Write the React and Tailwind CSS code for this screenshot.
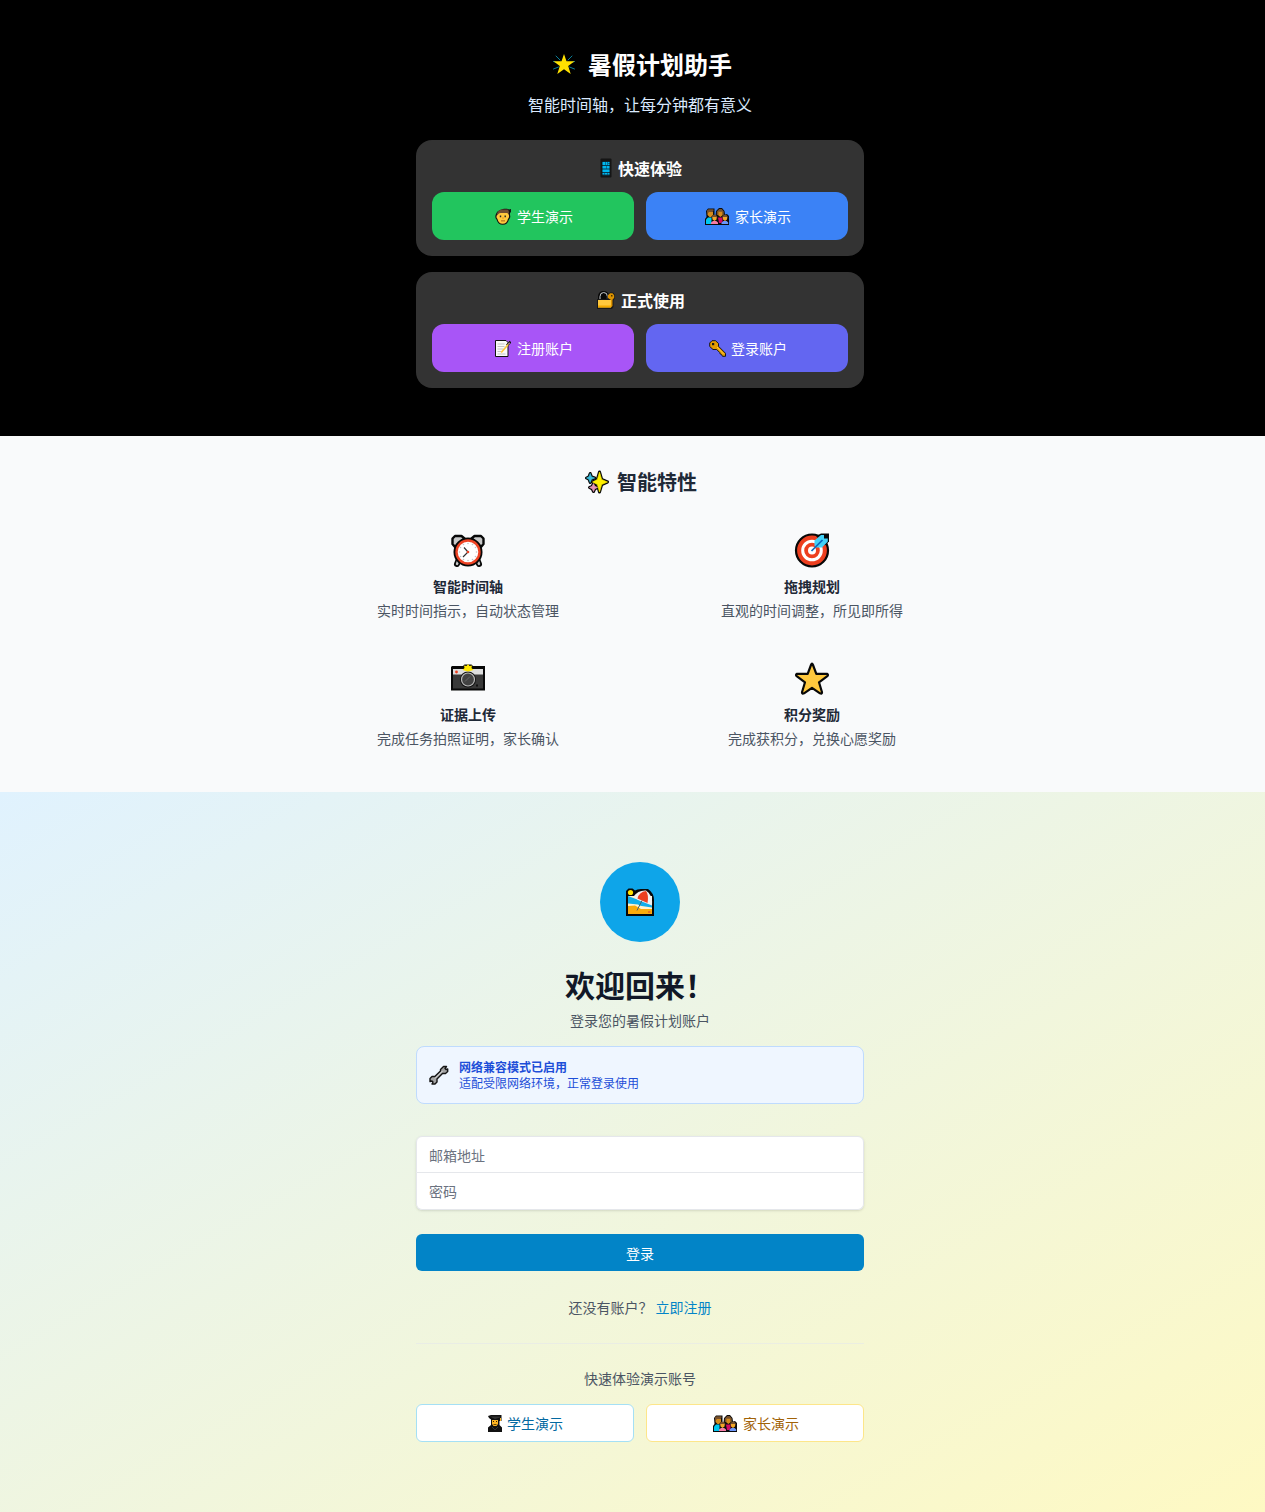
import React from "react";

function GlowingStar({ className }) {
  return (
    <svg viewBox="0 0 24 24" className={className} aria-hidden="true">
      <g stroke="#0a7d97" strokeWidth="1" strokeLinecap="round">
        <path d="M4 4l4 4M20 4l-4 4M1.500 9.500l3 1M22.500 9.500l-3 1M1.500 17l5-2M22.500 17l-5-2" />
      </g>
      <path fill="#ffe100" d="M12 2l2.500 7.200H22.500l-6.300 4.800 2.500 8L12 17.300l-6.700 4.700 2.500-8L1.500 9.200h8z" />
    </svg>
  );
}

function Phone({ className }) {
  return (
    <svg viewBox="0 0 12 20" className={className} aria-hidden="true">
      <rect x="0.500" y="0.500" width="11" height="19" rx="1" fill="#151515" />
      <rect x="2.500" y="3.500" width="7" height="14" fill="#073b50" />
      <g fill="#00b8f0">
        <path d="M2.500 4h3v3h-3zM6 4h1.500v3H6zM8 4h1.500v1.200H8zM8 5.800h1.500V7H8zM2.500 8h3.500v2.500H2.500zM6.500 8h3v2.500h-3zM2.500 11.500h7v2.500h-7zM2.500 15h2v1.500h-2zM5 15h2v1.500H5zM7.500 15h2v1.500h-2z" />
      </g>
    </svg>
  );
}

function Boy({ className }) {
  return (
    <svg viewBox="0 0 16 17" className={className} aria-hidden="true">
      <path fill="#111" d="M1 6C0 8 0 10 1.500 11.500 2.500 15 4.500 16.800 7.800 16.800S13 15 14 11.500c1.500-1.500 1.500-3.500 1-4.500V5l1-1V1l-2 .5C13 0 3 0 1 6z" />
      <path fill="#ffc83d" d="M2 7c-1 2-.3 3 .5 4 .6 3 2.300 4.800 5.200 4.800s4.600-1.800 5.200-4.800c.8-1 1.500-2 1-4l-1.500-3H4z" />
      <path fill="#704c32" d="M2 6.500c0-3 3-5 5.500-5H12c2 0 2 2.500 2 4.500l-2-1H5.500C4 5 3 6 2.700 7.500z" />
      <path fill="#222" d="M4.800 7.500h1.400V9.200H4.800zM9.500 7.500h1.400v1.700H9.500z" />
      <path fill="#e48a16" d="M7.200 9.500h1.600v1H7.200z" />
      <path fill="#8c4a12" d="M6 12.500h4v.8H6z" />
    </svg>
  );
}

function Family({ className }) {
  return (
    <svg viewBox="0 0 24 17" className={className} aria-hidden="true">
      <path fill="#0b0b0b" d="M0 17v-6l1.500-2L1 3l2-2.500h6.500V7l1 1 .5-5 3-3h3l2.500 3 .5 3.500 2-.5 2 2v3l2 3v3z" />
      <path fill="#d58b1b" d="M2.500 3.500h5.500v3.500L6 9H4.500l-2-2z" />
      <path fill="#76502c" d="M2 4.500V2.500l1.500-1.200h5V3L7 4H4L3 5zM11.800 7V3.500l2.500-2.600h2.400L18.800 3.500V7h-1.200V4h-4.400v3z" />
      <path fill="#d58b1b" d="M13.200 3.800h4.400v3.400l-2.200 1.800-2.200-1.800z" />
      <path fill="#00c7ef" d="M1 11.500L3 9.500h3.500V16H1z" />
      <path fill="#d20a61" d="M13 9.500h4.500V14l-1.500 1h-2z" />
      <path fill="#76502c" d="M6.800 10.500V8.500l1.700-1.700h2.200l1.500 1.700v2zM17.300 10.500V8.500l1.700-1.700h2.200l1.500 1.700v2z" />
      <path fill="#f2a728" d="M7.500 9h4v2.500l-2 1.500-2-1.500zM18 9h4v2.500l-2 1.500-2-1.500z" />
      <path fill="#f67da7" d="M6 14.500l2-1.500h3.200l1.800 1.500V16H6z" />
      <path fill="#6b96fa" d="M16.500 14.500l2-1.500h3.200l1.500 1.500V16h-6.700z" />
    </svg>
  );
}

function LockKey({ className }) {
  return (
    <svg viewBox="0 0 18 18" className={className} aria-hidden="true">
      <path fill="#080808" d="M1 9V5.500C1 2 3.500 0 6.500 0S11 1.500 12 4v5z" />
      <path d="M3 9V5.500a3.700 4 0 0 1 7.400 0V9" fill="none" stroke="#c8cdd0" strokeWidth="1" />
      <path fill="#181818" d="M0 8h10l1-5 2-1.500h3L18 4v3l-1.500 2v7L15 18H0z" />
      <path fill="#dd9300" d="M11 4.200l2-2h2.500l1.700 2v2.500l-1.700 2V15L14 16.500V9l-3-2z" />
      <path fill="#ffc83d" d="M1 9h13v7.500H1z" />
      <path fill="#f2a900" d="M1 14.500h13v2H1z" />
      <path fill="#493300" d="M14 4h1.500v1.500H14z" />
    </svg>
  );
}

function Memo({ className }) {
  return (
    <svg viewBox="0 0 16 17" className={className} aria-hidden="true">
      <path fill="#fafafa" stroke="#111" strokeWidth="1" d="M.5.500h10.500l2 2V16.500H.5z" />
      <path stroke="#c4c4c4" strokeWidth="1" d="M2.500 4h7M2.500 6.500h7M2.500 9h6M2.500 11.500h3.500M2.500 14h8" />
      <path stroke="#111" strokeWidth="2.600" d="M12 5.500L15.500 1.500" />
      <path stroke="#ffc83d" strokeWidth="1.700" d="M6.200 12.500l7-8" />
      <path stroke="#b08c80" strokeWidth="1.400" d="M13.200 4.500l1.500-1.800" />
    </svg>
  );
}

function Key({ className }) {
  return (
    <svg viewBox="0 0 17 17" className={className} aria-hidden="true">
      <path fill="#e39b00" stroke="#171717" strokeWidth="1" strokeLinejoin="round" d="M3 .7h3.500l3 2.800v2.800l7 7v3h-3l-1-1.800-1.200-.4-.6-1.600-3-3H4L.7 6.500V3z" />
      <path fill="#171717" d="M3 3h2.200v2.200H3z" />
      <path stroke="#ffc83d" strokeWidth="1" d="M8 7l6.500 7" />
    </svg>
  );
}

function Sparkles({ className }) {
  return (
    <svg viewBox="0 0 24 24" className={className} aria-hidden="true">
      <g stroke="#080808" strokeWidth="3" strokeLinejoin="round" fill="#080808">
        <path d="M5.200 3.500l1.300 3.300L9.700 8 6.500 9.300 5.200 12.500 3.900 9.300 1.500 8l2.400-1.200z" />
        <path d="M8.500 13.500l1.300 2.700 2.700 1.300-2.700 1.300-1.300 2.700-1.300-2.700-2.700-1.300 2.700-1.300z" />
        <path d="M14.500 2l2.200 7.500L22.500 12l-5.800 2.500L14.500 22l-2.200-7.500L7.500 12l4.800-2.500z" />
      </g>
      <path fill="#3bbcdc" stroke="#3bbcdc" strokeWidth=".6" d="M5.200 3.500l1.300 3.300L9.700 8 6.500 9.300 5.200 12.500 3.900 9.300 1.500 8l2.400-1.200z" />
      <path fill="#e895b6" stroke="#e895b6" strokeWidth=".6" d="M8.500 13.500l1.300 2.700 2.700 1.300-2.700 1.300-1.300 2.700-1.300-2.700-2.700-1.300 2.700-1.300z" />
      <path fill="#fff000" stroke="#fff000" strokeWidth=".6" d="M14.500 2l2.200 7.500L22.500 12l-5.800 2.500L14.500 22l-2.200-7.500L7.500 12l4.800-2.500z" />
    </svg>
  );
}

function AlarmClock({ className }) {
  return (
    <svg viewBox="0 0 36 36" className={className} aria-hidden="true">
      <path stroke="#080808" strokeWidth="6" strokeLinecap="round" d="M9 27l-2 5M27 27l2 5" />
      <path fill="#c9c9c9" stroke="#080808" strokeWidth="2.400" strokeLinejoin="round" d="M5 15L2.500 12V6.500L5 4h6.500l3 2.500zM31 15l2.500-3V6.500L31 4h-6.500l-3 2.500z" />
      <path stroke="#c9c9c9" strokeWidth="2.400" strokeLinecap="round" d="M8.500 28l-1.500 4M27.500 28l1.500 4" />
      <circle cx="18" cy="20" r="14.500" fill="#080808" />
      <circle cx="18" cy="20" r="11.500" fill="#fff" stroke="#ed4324" strokeWidth="2.400" />
      <g fill="#bfc4c7">
        <circle cx="18" cy="11.500" r=".8" /><circle cx="22.500" cy="12.500" r=".8" /><circle cx="25.500" cy="15.500" r=".8" />
        <circle cx="26.500" cy="20" r=".8" /><circle cx="25.500" cy="24.500" r=".8" /><circle cx="22.500" cy="27.500" r=".8" />
        <circle cx="18" cy="28.500" r=".8" /><circle cx="13.500" cy="27.500" r=".8" /><circle cx="10.500" cy="24.500" r=".8" />
        <circle cx="9.500" cy="20" r=".8" /><circle cx="10.500" cy="15.500" r=".8" /><circle cx="13.500" cy="12.500" r=".8" />
      </g>
      <path d="M14 15.500l4 4.500-5 5" fill="none" stroke="#333" strokeWidth="1.200" />
      <circle cx="18" cy="20" r="1.300" fill="#ed4324" />
    </svg>
  );
}

function Target({ className }) {
  return (
    <svg viewBox="0 0 36 36" className={className} aria-hidden="true">
      <circle cx="18" cy="18.500" r="16" fill="#ed3f1f" stroke="#080808" strokeWidth="2.200" />
      <path fill="#080808" d="M22 4l5-2.500h8v8l-4 4z" />
      <circle cx="18" cy="18.500" r="9.300" fill="none" stroke="#fff" strokeWidth="3" />
      <circle cx="18" cy="18.500" r="4" fill="#fff" />
      <path fill="#43d2f8" d="M20.500 14V8.500L27 3h3v3.500h3.800v3L28 15.500h-5.500z" />
      <path stroke="#0b68bd" strokeWidth="1.700" d="M17.500 19L28.500 8" />
    </svg>
  );
}

function Camera({ className }) {
  return (
    <svg viewBox="0 0 36 36" className={className} aria-hidden="true">
      <path fill="#080808" d="M2 6h11l1.500-1.500h7L23 6h12v24.500H1V7z" />
      <path fill="#393939" d="M3 14h30v14.500H3z" />
      <path fill="#dedede" d="M3 9h30v5.500H3z" />
      <circle cx="18" cy="19.500" r="8" fill="#111" />
      <circle cx="18" cy="19.500" r="6.500" fill="#424242" stroke="#b9b9b9" strokeWidth="1.200" />
      <path stroke="#666" d="M15 21.500l5-5" />
      <circle cx="6.500" cy="12" r="1.400" fill="#ed3f1f" />
      <path fill="#ffe600" d="M18 4l1.500 2 2.500-.5-.5 2.500L23.500 10 18 11.500 12.500 10 14.500 8l-.5-2.500 2.500.5z" />
      <path fill="#111" d="M26 24.500h2v2h-2z" />
    </svg>
  );
}

function Star({ className }) {
  return (
    <svg viewBox="0 0 36 36" className={className} aria-hidden="true">
      <path fill="#ffc83d" stroke="#080808" strokeWidth="2.200" strokeLinejoin="round" d="M17 5q1-3 2 0l3.300 8.800H33q2 1 0 2.500l-8 6 3 10q0 2-2 1l-8-5.500-8 5.500q-2 1-2-1l3-10-8-6q-2-1.500 0-2.500h10.700z" />
    </svg>
  );
}

function Beach({ className }) {
  return (
    <svg viewBox="0 0 28 28" className={className} aria-hidden="true">
      <path fill="#080808" d="M0 28V3L2.500.500h4L9 2.500Q11 1 15 1h7q6 4 6 11v16z" />
      <path fill="#fff3cf" d="M2 8h24v18H2z" />
      <path fill="#11aeea" d="M2 8l8 3 16 5v3.500L2 16z" />
      <path fill="#fff3cf" d="M2 15.500l10 1 6 3.500h8v1.500H2z" />
      <path fill="#faab0b" d="M2 18l7-.5 6 3.500h11v5H2z" />
      <path fill="#f1f1f1" d="M7.500 8.500Q12 2 20 2.500 27 7 26 17.500L12 12z" />
      <path fill="#ed3f1f" d="M11.500 10.500Q13 4 20 3q3 4 1.500 12z" />
      <path stroke="#4c6670" strokeWidth="1" d="M16 12.500l-5 10" />
      <circle cx="4.500" cy="4.500" r="2.600" fill="#ffe100" />
      <path fill="#ed7120" d="M22 23h2l1 1-1 1h-2z" />
    </svg>
  );
}

function Wrench({ className }) {
  return (
    <svg viewBox="0 0 20 20" className={className} aria-hidden="true">
      <path
        fill="#a3a3a3"
        stroke="#151515"
        strokeWidth="1.400"
        strokeLinejoin="round"
        d="M11.500 4.500l3-3h3L16 3.500 17 4.500l1.700-.5v2.500L16.500 8.500h-3l-5.500 5.500v3L6 19H3l1-2-1-1-2 .5v-3L3 11.500h2.800L11.500 6z"
      />
      <path stroke="#dedede" strokeWidth="1" d="M6 13.500l7.500-7.500" />
    </svg>
  );
}

function Student({ className }) {
  return (
    <svg viewBox="0 0 14 17" className={className} aria-hidden="true">
      <path fill="#111" d="M0 1l3-1h10.500v6h-2v4L14 12.500V17H0v-4.500L3 10V4.500L1 3z" />
      <path fill="#333" d="M2 1.500h10v1L7 4z" />
      <path fill="#ffb521" d="M4 5h6v4l-1.500 2h-3L4 9z" />
      <path fill="#342000" d="M5 6h1v1H5zM8 6h1v1H8zM5.500 9h3v.7h-3z" />
      <path fill="#ffb521" d="M12 3h1v3h-1z" />
      <path stroke="#444" strokeWidth=".7" d="M4 12l3 3 3-3" fill="none" />
    </svg>
  );
}

function DemoButton({ color, iconBox, icon, children }) {
  return (
    <button type="button" className={`flex h-12 items-center justify-center gap-1 rounded-xl text-sm text-white ${color}`}>
      <span className={`flex justify-center ${iconBox}`}>{icon}</span>
      <span>{children}</span>
    </button>
  );
}

function Panel({ iconBox, icon, title, children }) {
  return (
    <div className="rounded-2xl bg-[#333333] p-4">
      <h2 className="mb-3 flex items-center justify-center gap-1 text-base font-bold text-white">
        <span className={`flex justify-center ${iconBox}`}>{icon}</span>
        <span>{title}</span>
      </h2>
      <div className="grid grid-cols-2 gap-3">{children}</div>
    </div>
  );
}

const features = [
  { Icon: AlarmClock, title: "智能时间轴", text: "实时时间指示，自动状态管理" },
  { Icon: Target, title: "拖拽规划", text: "直观的时间调整，所见即所得" },
  { Icon: Camera, title: "证据上传", text: "完成任务拍照证明，家长确认" },
  { Icon: Star, title: "积分奖励", text: "完成获积分，兑换心愿奖励" },
];

export default function App() {
  return (
    <div lang="zh-CN" className="font-['Noto_Sans_CJK_SC',sans-serif]">
      <header className="bg-black py-12 pl-[15px]">
        <div className="mx-auto max-w-md">
          <h1 className="mb-3 flex items-center justify-center gap-2 text-2xl font-bold text-white">
            <span className="flex w-8 justify-center"><GlowingStar className="size-6" /></span>
            <span>暑假计划助手</span>
          </h1>
          <p className="mb-6 text-center text-base text-[#dbeafe]">智能时间轴，让每分钟都有意义</p>
          <div className="grid gap-4">
            <Panel iconBox="w-4" icon={<Phone className="h-5 w-3" />} title="快速体验">
              <DemoButton color="bg-[#22c55e]" iconBox="w-5" icon={<Boy className="h-[17px] w-4" />}>学生演示</DemoButton>
              <DemoButton color="bg-[#3b82f6]" iconBox="w-7" icon={<Family className="h-[17px] w-6" />}>家长演示</DemoButton>
            </Panel>
            <Panel iconBox="w-[22px]" icon={<LockKey className="size-[18px]" />} title="正式使用">
              <DemoButton color="bg-[#a855f7]" iconBox="w-5" icon={<Memo className="h-[17px] w-4" />}>注册账户</DemoButton>
              <DemoButton color="bg-[#6366f1]" iconBox="w-5" icon={<Key className="size-[17px]" />}>登录账户</DemoButton>
            </Panel>
          </div>
        </div>
      </header>

      <section className="bg-[#f9fafb] py-8 pl-[15px]">
        <h2 className="mb-6 flex items-center justify-center gap-1.5 text-xl font-bold text-[#1f2937]">
          <span className="flex w-7 justify-center"><Sparkles className="size-6" /></span>
          <span>智能特性</span>
        </h2>
        <div className="mx-auto grid max-w-2xl grid-cols-2 gap-4">
          {features.map(({ Icon, title, text }) => (
            <div key={title} className="p-3 text-center text-sm">
              <Icon className="mx-auto mb-2 size-9" />
              <h3 className="mb-1 font-bold text-[#1f2937]">{title}</h3>
              <p className="text-[#4b5563]">{text}</p>
            </div>
          ))}
        </div>
      </section>

      <main className="bg-[linear-gradient(to_bottom_right,#e0f2fe,#fef9c3)] py-[70px] pl-[15px]">
        <div className="mx-auto max-w-md">
          <div className="mx-auto flex size-20 items-center justify-center rounded-full bg-[#0ea5e9]">
            <Beach className="size-7" />
          </div>
          <h2 className="mt-6 text-center text-3xl font-bold text-[#111827]">欢迎回来！</h2>
          <p className="mt-2 text-center text-sm text-[#4b5563]">登录您的暑假计划账户</p>

          <div className="mt-4 flex items-center gap-2.5 rounded-lg border border-[#bfdbfe] bg-[#eff6ff] p-3 text-xs text-[#1d4ed8]">
            <Wrench className="size-5" />
            <div>
              <p className="font-bold">网络兼容模式已启用</p>
              <p>适配受限网络环境，正常登录使用</p>
            </div>
          </div>

          <form className="mt-8" onSubmit={(e) => e.preventDefault()}>
            <div className="rounded-md shadow-sm">
              <input type="email" aria-label="邮箱地址" placeholder="邮箱地址" className="block h-[37px] w-full rounded-t-md border border-[#e5e7eb] bg-white px-3 text-sm text-[#111827] placeholder:text-[#6b7280]" />
              <input type="password" aria-label="密码" placeholder="密码" className="block h-[37px] w-full rounded-b-md border border-t-0 border-[#e5e7eb] bg-white px-3 text-sm text-[#111827] placeholder:text-[#6b7280]" />
            </div>
            <button type="submit" className="mt-6 flex h-[37px] w-full items-center justify-center rounded-md bg-[#0284c7] text-sm text-white">登录</button>
          </form>

          <p className="mt-6 text-center text-sm leading-6 text-[#4b5563]">
            还没有账户？ <a href="#register" className="text-[#0284c7]">立即注册</a>
          </p>

          <div className="mt-6 border-t border-[#e5e7eb]/60 pt-6">
            <p className="text-center text-sm text-[#4b5563]">快速体验演示账号</p>
            <div className="mt-4 grid grid-cols-2 gap-3">
              <button type="button" className="flex h-[38px] items-center justify-center gap-1 rounded-md border border-[#a5e0f5] bg-white text-sm text-[#0369a1]">
                <span className="flex w-4 justify-center"><Student className="h-[17px] w-3.5" /></span>
                <span>学生演示</span>
              </button>
              <button type="button" className="flex h-[38px] items-center justify-center gap-1 rounded-md border border-[#fde68a] bg-white text-sm text-[#a16207]">
                <span className="flex w-7 justify-center"><Family className="h-[17px] w-6" /></span>
                <span>家长演示</span>
              </button>
            </div>
          </div>
        </div>
      </main>
    </div>
  );
}
